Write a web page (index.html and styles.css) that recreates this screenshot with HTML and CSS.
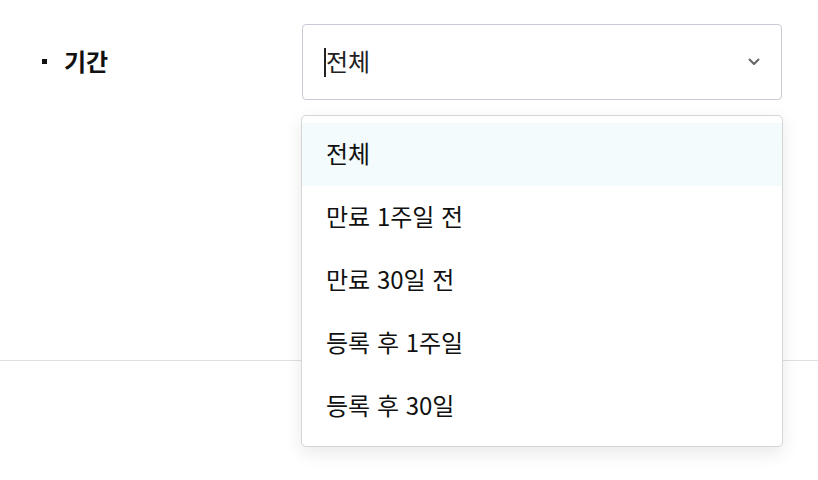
FILE: index.html
```html
<!DOCTYPE html>
<html lang="ko">
<head>
<meta charset="utf-8">
<link rel="stylesheet" href="styles.css">
</head>
<body>
<div class="section">
  <div class="row">
    <div class="label"><span class="bullet"></span><span class="label-text">기간</span></div>
    <div class="select-wrap">
      <div class="select">
        <span class="caret"></span><span class="value">전체</span>
        <svg class="chevron" width="12" height="8" viewBox="0 0 12 8"><path d="M1.5 1.5 L6 6 L10.5 1.5" fill="none" stroke="#666" stroke-width="2" stroke-linecap="round" stroke-linejoin="round"/></svg>
      </div>
      <ul class="menu">
        <li class="item active">전체</li>
        <li class="item">만료 1주일 전</li>
        <li class="item">만료 30일 전</li>
        <li class="item">등록 후 1주일</li>
        <li class="item">등록 후 30일</li>
      </ul>
    </div>
  </div>
</div>
</body>
</html>
```
FILE: styles.css
```css
html, body {
  margin: 0;
  padding: 0;
  background: #fff;
}
body {
  font-family: "Noto Sans CJK KR", "Noto Sans", sans-serif;
  color: #111;
  width: 818px;
  height: 480px;
  overflow: hidden;
}
.section {
  height: 336px;
  padding-top: 24px;
  border-bottom: 1px solid #dcdfe3;
}
.row {
  display: flex;
  align-items: flex-start;
  padding-left: 42px;
}
.label {
  width: 260px;
  height: 76px;
  display: flex;
  align-items: center;
  gap: 17px;
  padding-bottom: 4px;
  box-sizing: border-box;
}
.bullet {
  width: 5px;
  height: 5px;
  background: #111;
  margin-top: 3px;
}
.label-text {
  font-size: 24px;
  font-weight: 700;
  color: #111;
}
.select-wrap {
  position: relative;
  width: 480px;
}
.select {
  box-sizing: border-box;
  height: 76px;
  border: 1px solid #c7cbd3;
  border-radius: 4px;
  display: flex;
  align-items: center;
  padding-left: 21px;
  padding-right: 21px;
  padding-bottom: 4px;
  font-size: 24px;
  color: #222;
}
.caret {
  width: 2px;
  height: 29px;
  background: #222;
  margin-top: 4px;
}
.value {
  flex: 1;
}
.chevron {
  display: block;
  margin-top: 4px;
}
.menu {
  position: absolute;
  top: 91px;
  left: -1px;
  width: 482px;
  box-sizing: border-box;
  margin: 0;
  padding: 7px 0 8px;
  list-style: none;
  background: #fff;
  border: 1px solid #d6d6d6;
  border-radius: 5px;
  box-shadow: 0 6px 18px rgba(0, 0, 0, 0.09);
  z-index: 10;
}
.item {
  box-sizing: border-box;
  height: 63px;
  display: flex;
  align-items: center;
  padding-left: 24px;
  padding-bottom: 5px;
  font-size: 24px;
  color: #111;
}
.item.active {
  background: #f3fbfd;
}
```
